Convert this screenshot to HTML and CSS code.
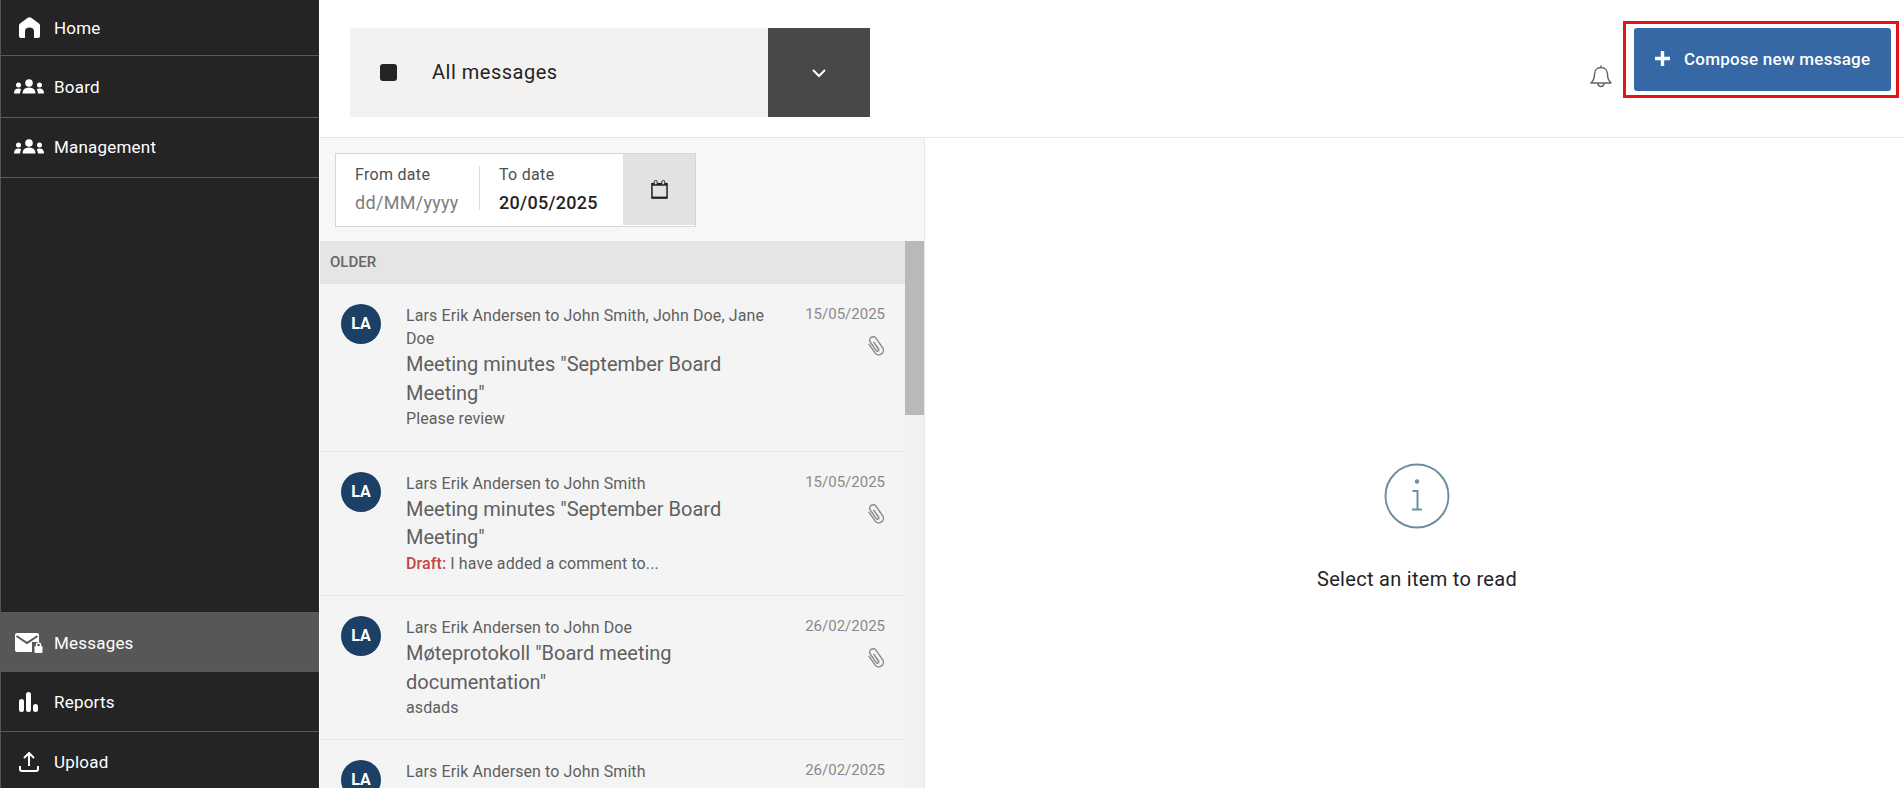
FILE: index.html
```html
<!DOCTYPE html>
<html lang="en">
<head>
<meta charset="utf-8">
<title>Messages</title>
<link rel="stylesheet" href="styles.css">
</head>
<body>
<div class="app">
  <aside class="sidebar">
    <nav class="nav-group">
      <a class="nav-item nav-home"><span class="nav-icon"><svg width="21" height="21" viewBox="0 0 21 21"><path fill="#fff" d="M0 8.500Q0 7.300 1 6.400L8.800.8q1.700-1.200 3.400 0L20 6.400q1 .9 1 2.100V19q0 2-2 2h-4v-6.500q0-4-4.500-4T6 14.500V21H2q-2 0-2-2Z"/></svg></span>Home</a>
      <a class="nav-item nav-board"><span class="nav-icon"><svg width="30" height="15" viewBox="0 0 30 15"><g fill="#fff"><circle cx="15" cy="4" r="3.800"/><path d="M8.500 14.500q0-6 6.500-6t6.500 6Z"/><circle cx="4.500" cy="6" r="2.500"/><path d="M0 14.500q0-5 4.500-5 2 0 2.700 1-1 1.500-1.200 4Z"/><circle cx="25.500" cy="6" r="2.500"/><path d="M30 14.500q0-5-4.500-5-2 0-2.700 1 1 1.500 1.200 4Z"/></g></svg></span>Board</a>
      <a class="nav-item nav-management"><span class="nav-icon"><svg width="30" height="15" viewBox="0 0 30 15"><g fill="#fff"><circle cx="15" cy="4" r="3.800"/><path d="M8.500 14.500q0-6 6.500-6t6.500 6Z"/><circle cx="4.500" cy="6" r="2.500"/><path d="M0 14.500q0-5 4.500-5 2 0 2.700 1-1 1.500-1.200 4Z"/><circle cx="25.500" cy="6" r="2.500"/><path d="M30 14.500q0-5-4.500-5-2 0-2.700 1 1 1.500 1.200 4Z"/></g></svg></span>Management</a>
    </nav>
    <nav class="nav-group">
      <a class="nav-item nav-active"><span class="nav-icon"><svg width="28" height="20" viewBox="0 0 28 20"><rect x="0" y="0" width="24" height="19" rx="2" fill="#fff"/><path d="M1.500 3l10.500 7 10.500-7" fill="none" stroke="#575757" stroke-width="2"/><rect x="17" y="9" width="11" height="11" fill="#575757"/><rect x="19.500" y="13" width="8" height="7" rx="1" fill="#fff"/><path d="M21.500 13.500v-1.500a2 2 0 0 1 4 0v1.500" fill="none" stroke="#fff" stroke-width="1.500"/></svg></span>Messages</a>
      <a class="nav-item"><span class="nav-icon"><svg width="20" height="20" viewBox="0 0 20 20"><g fill="#fff"><rect x="0" y="7" width="5" height="13" rx="2.500"/><rect x="7" y="0" width="5" height="20" rx="2.500"/><rect x="14" y="12" width="5" height="8" rx="2.500"/></g></svg></span>Reports</a>
      <a class="nav-item nav-last"><span class="nav-icon"><svg width="20" height="20" viewBox="0 0 20 20"><path d="M10 14V1.500M5 6l5-5 5 5M1 14v3q0 2 2 2h14q2 0 2-2v-3" fill="none" stroke="#fff" stroke-width="2"/></svg></span>Upload</a>
    </nav>
  </aside>
  <main class="main">
    <header class="topbar">
      <div class="filter">
        <div class="filter-label"><span class="filter-square"></span><span>All messages</span></div>
        <div class="filter-toggle"><svg width="16" height="10" viewBox="0 0 16 10"><path d="M2 2l6 6 6-6" fill="none" stroke="#fff" stroke-width="2"/></svg></div>
      </div>
      <div class="actions">
        <svg class="bell" width="22" height="25" viewBox="0 0 22 25"><path d="M11 1.500v2M11 3.500c-4 0-6.500 3-6.500 7 0 4-1 6-3.500 8.500h20c-2.500-2.500-3.500-4.500-3.500-8.500 0-4-2.500-7-6.500-7ZM8 19.500a3 3 0 0 0 6 0" fill="none" stroke="#666" stroke-width="1.500" stroke-linejoin="round"/></svg>
        <div class="compose-wrap">
          <a class="compose"><svg width="15" height="15" viewBox="0 0 15 15"><path d="M7.500 0v15M0 7.500h15" stroke="#fff" stroke-width="3.400"/></svg>Compose new message</a>
          <span class="highlight"></span>
        </div>
      </div>
    </header>
    <div class="content">
      <section class="list-panel">
        <div class="date-range">
          <div class="date-field date-from"><span class="date-label">From date</span><span class="date-placeholder">dd/MM/yyyy</span></div>
          <div class="date-field date-to"><span class="date-label">To date</span><span class="date-value">20/05/2025</span></div>
          <div class="date-button"><svg width="17" height="19" viewBox="0 0 18 20"><path d="M1 4h16v15H1Z" fill="none" stroke="#222" stroke-width="1.600"/><path d="M1 17.500h16v2H1Z" fill="#222"/><path d="M1 3h16v3H1Z" fill="#222"/><rect x="3.500" y="0.500" width="3" height="4.500" rx="1.200" fill="#e3e2e0" stroke="#222"/><rect x="11.500" y="0.500" width="3" height="4.500" rx="1.200" fill="#e3e2e0" stroke="#222"/></svg></div>
        </div>
        <div class="list-scroll">
          <div class="list">
            <div class="group-head">OLDER</div>
            <article class="msg">
              <div class="avatar">LA</div>
              <div class="msg-body">
                <div class="msg-sender">Lars Erik Andersen to John Smith, John Doe, Jane Doe</div>
                <div class="msg-title">Meeting minutes "September Board Meeting"</div>
                <div class="msg-preview">Please review</div>
              </div>
              <div class="msg-meta"><span>15/05/2025</span><svg class="clip" width="23" height="23" viewBox="0 0 20 20"><path d="M6 6V15a4 4 0 0 0 8 0V5a3 3 0 0 0-6 0V14a1.200 1.200 0 0 0 2.400 0V7" transform="rotate(-35 10 10)" fill="none" stroke="#8c8c8c" stroke-width="1.300" stroke-linecap="round"/></svg></div>
            </article>
            <article class="msg">
              <div class="avatar">LA</div>
              <div class="msg-body">
                <div class="msg-sender">Lars Erik Andersen to John Smith</div>
                <div class="msg-title">Meeting minutes "September Board Meeting"</div>
                <div class="msg-preview"><span class="draft">Draft:</span> I have added a comment to...</div>
              </div>
              <div class="msg-meta"><span>15/05/2025</span><svg class="clip" width="23" height="23" viewBox="0 0 20 20"><path d="M6 6V15a4 4 0 0 0 8 0V5a3 3 0 0 0-6 0V14a1.200 1.200 0 0 0 2.400 0V7" transform="rotate(-35 10 10)" fill="none" stroke="#8c8c8c" stroke-width="1.300" stroke-linecap="round"/></svg></div>
            </article>
            <article class="msg">
              <div class="avatar">LA</div>
              <div class="msg-body">
                <div class="msg-sender">Lars Erik Andersen to John Doe</div>
                <div class="msg-title">Møteprotokoll "Board meeting documentation"</div>
                <div class="msg-preview">asdads</div>
              </div>
              <div class="msg-meta"><span>26/02/2025</span><svg class="clip" width="23" height="23" viewBox="0 0 20 20"><path d="M6 6V15a4 4 0 0 0 8 0V5a3 3 0 0 0-6 0V14a1.200 1.200 0 0 0 2.400 0V7" transform="rotate(-35 10 10)" fill="none" stroke="#8c8c8c" stroke-width="1.300" stroke-linecap="round"/></svg></div>
            </article>
            <article class="msg">
              <div class="avatar">LA</div>
              <div class="msg-body">
                <div class="msg-sender">Lars Erik Andersen to John Smith</div>
              </div>
              <div class="msg-meta"><span>26/02/2025</span></div>
            </article>
          </div>
          <div class="scrollbar"><div class="scrollbar-thumb"></div></div>
        </div>
      </section>
      <section class="reader">
        <svg width="66" height="66" viewBox="0 0 66 66"><circle cx="33" cy="33" r="31.500" fill="none" stroke="#6f8f9e" stroke-width="2"/><circle cx="33" cy="18.500" r="2.200" fill="#6f8f9e"/><path d="M28.500 28H33.500V46.500M28 46.500H38" fill="none" stroke="#6f8f9e" stroke-width="2"/></svg>
        <p class="reader-text">Select an item to read</p>
      </section>
    </div>
  </main>
</div>
</body>
</html>
```

FILE: styles.css
```css
* { box-sizing: border-box; }
html, body { margin: 0; height: 100%; overflow: hidden; }
body { font-family: Roboto, "Liberation Sans", sans-serif; color: #242424; background: #fff; }
.app { display: flex; height: 788px; }

.sidebar { width: 319px; margin-right: 1px; flex: none; display: flex; flex-direction: column; justify-content: space-between; background: #242424; border-left: 1px solid #555; }
.nav-item { display: flex; align-items: center; height: 60px; padding-left: 13px; gap: 10px; color: #fff; font-size: 17px; letter-spacing: .2px; border-bottom: 1px solid #5a5a5a; }
.nav-home { height: 56px; }
.nav-board { height: 62px; }
.nav-management { padding-bottom: 2px; }
.nav-active { background: #575757; border-top: 1px solid #5a5a5a; padding-top: 1px; }
.nav-last { height: 56px; padding-top: 4px; border-bottom: 0; }
.nav-icon { width: 30px; display: flex; justify-content: center; align-items: center; flex: none; }

.main { flex: 1; min-width: 0; display: flex; flex-direction: column; }
.topbar { height: 138px; flex: none; display: flex; justify-content: space-between; align-items: flex-start; padding: 28px 12px 0 30px; border-bottom: 1px solid #e6e6e6; }
.filter { display: flex; width: 520px; height: 89px; }
.filter-label { flex: 1; display: flex; align-items: center; gap: 35px; padding: 0 0 1px 30px; background: #f3f2f1; font-size: 20px; letter-spacing: .5px; }
.filter-square { width: 17px; height: 17px; border-radius: 3px; background: #242424; }
.filter-toggle { width: 102px; display: flex; align-items: center; justify-content: center; background: #4a4846; }
.actions { display: flex; align-items: flex-start; gap: 22px; }
.bell { margin-top: 36px; }
.compose-wrap { position: relative; }
.compose { width: 257px; height: 63px; display: flex; align-items: center; gap: 14px; padding: 0 0 2px 21px; background: #3568a4; border-radius: 3px; color: #fff; font-size: 17px; font-weight: 500; letter-spacing: .25px; }
.highlight { position: absolute; top: -7px; bottom: -7px; left: -11px; right: -8px; border: 3px solid #e3131c; }

.content { flex: 1; min-height: 0; display: flex; }
.list-panel { width: 605px; flex: none; display: flex; flex-direction: column; background: #f7f7f7; border-right: 1px solid #e6e6e6; }
.date-range { display: flex; width: 361px; height: 74px; margin: 15px 0 14px 15px; flex: none; background: #fff; border: 1px solid #d6d6d6; }
.date-field { display: flex; flex-direction: column; gap: 9px; height: 44px; margin-top: 12px; font-size: 16px; letter-spacing: .3px; }
.date-from { width: 143px; padding-left: 19px; }
.date-to { width: 144px; padding-left: 19px; border-left: 1px solid #dcdcdc; }
.date-label { color: #4f4f4f; line-height: 18px; }
.date-placeholder { color: #7d7d7d; font-size: 18px; line-height: 20px; }
.date-value { color: #242424; font-size: 18px; font-weight: 500; line-height: 20px; }
.date-button { flex: 1; display: flex; align-items: center; justify-content: center; background: #e3e2e0; margin-bottom: 1px; }

.list-scroll { flex: 1; min-height: 0; display: flex; overflow: hidden; }
.list { flex: 1; min-width: 0; background: #f4f4f4; }
.scrollbar { width: 19px; flex: none; background: #f1f1f1; }
.scrollbar-thumb { height: 174px; background: #b9b9b9; }
.group-head { height: 43px; display: flex; align-items: center; padding: 0 0 2px 10px; background: #e5e5e5; color: #666; font-size: 15px; font-weight: 500; }

.msg { display: flex; padding: 20px 20px 20px 21px; border-bottom: 1px solid #e8e8e8; color: #5f5f5f; }
.avatar { width: 40px; height: 40px; flex: none; border-radius: 50%; display: flex; align-items: center; justify-content: center; padding-bottom: 1px; background: #1c3f66; color: #fff; font-size: 16px; font-weight: 700; }
.msg-body { width: 370px; margin-left: 25px; flex: none; }
.msg-sender { font-size: 16px; line-height: 23.200px; letter-spacing: .1px; }
.msg-title { font-size: 20px; line-height: 28.500px; }
.msg-preview { font-size: 16px; line-height: 23.200px; letter-spacing: .1px; }
.draft { color: #c0474a; font-weight: 500; }
.msg-meta { flex: 1; display: flex; flex-direction: column; align-items: flex-end; gap: 10px; color: #8a8a8a; font-size: 15px; line-height: 20px; }
.clip { display: block; margin-right: -2px; }

.reader { flex: 1; display: flex; flex-direction: column; align-items: center; padding: 325px 0 0 6px; }
.reader-text { margin: 38px 0 0; font-size: 20px; line-height: 24px; letter-spacing: .3px; }
```
